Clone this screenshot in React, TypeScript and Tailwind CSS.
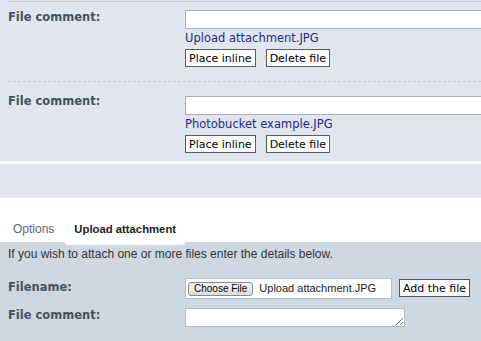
import React from 'react';

const verdana = { fontFamily: '"DejaVu Sans", Verdana, sans-serif' };
const arial = { fontFamily: '"Liberation Sans", Arial, sans-serif' };

type AttachmentProps = {
  fileName: string;
  labelPad: string;
  rowClass: string;
};

const AttachmentRow: React.FC<AttachmentProps> = ({ fileName, labelPad, rowClass }) => {
  return (
    <div className={`flex ${rowClass}`}>
      <div
        className={`w-[177px] shrink-0 text-[11.5px] font-bold leading-[13px] text-[#465064] ${labelPad}`}
        style={verdana}
      >
        File comment:
      </div>
      <div className="flex flex-col" style={verdana}>
        <input
          type="text"
          className="h-[19px] w-[320px] border border-[#a9b0ba] bg-white outline-none"
        />
        <div className="h-[20px] flex items-center text-[11.5px] text-[#23297f]">{fileName}</div>
        <div className="flex gap-[10px]">
          <button className="h-[18px] border border-[#5c5c5c] bg-white px-[3px] text-[11px] leading-none text-black">
            Place inline
          </button>
          <button className="h-[18px] border border-[#5c5c5c] bg-white px-[3px] text-[11px] leading-none text-black">
            Delete file
          </button>
        </div>
      </div>
    </div>
  );
};

export default function App() {
  return (
    <div className="w-[481px] h-[341px] overflow-hidden bg-white">
      {/* Pièces jointes déjà envoyées */}
      <div className="h-[161px] bg-[#e1e6ee] pl-2 pt-px">
        <div className="border-t border-[#c6cdd7]">
          <AttachmentRow fileName="Upload attachment.JPG" labelPad="pt-[1px]" rowClass="pt-[8px] pb-[14px]" />
        </div>
        <div className="border-t border-dashed border-[#c3cad4]">
          <AttachmentRow fileName="Photobucket example.JPG" labelPad="-mt-[1px]" rowClass="pt-[14px]" />
        </div>
      </div>

      <div className="h-[3px] bg-white" />
      <div className="h-[34px] bg-[#e1e6ee]" />

      {/* Onglets */}
      <div className="h-[44px] flex items-end pl-[4px] gap-[2px] bg-white" style={arial}>
        <div className="h-[26px] px-[9px] flex items-center text-[12px] text-[#5d6777]">Options</div>
        <div className="relative h-[26px] px-[9px] flex items-center text-[11.3px] font-bold text-[#1e1e1e] bg-white">
          Upload attachment
          <div className="absolute left-0 right-0 -bottom-[3px] h-[3px] bg-white rounded-b-[3px]" />
        </div>
      </div>

      {/* Panneau d'envoi */}
      <div className="h-[99px] bg-[#ced7e2] pl-2 pt-[5px]">
        <div className="text-[12px] leading-[14px] text-[#333333]" style={arial}>
          If you wish to attach one or more files enter the details below.
        </div>

        <div className="flex mt-[17px]">
          <div
            className="w-[177px] shrink-0 pt-[3px] text-[11.5px] font-bold leading-[13px] text-[#465064]"
            style={verdana}
          >
            Filename:
          </div>
          <div className="h-[21px] w-[207px] border border-[#b3bbc6] bg-white flex items-center pl-[2px]" style={arial}>
            <span className="h-[14px] px-[5px] flex items-center rounded-[3px] border border-[#8a8a8a] bg-gradient-to-b from-[#f7f7f7] to-[#dcdcdc] text-[10px] leading-none text-black">
              Choose File
            </span>
            <span className="ml-[6px] text-[11px] text-[#222222]">Upload attachment.JPG</span>
          </div>
          <button
            className="ml-[7px] mt-px h-[18px] border border-[#555555] bg-white px-[3px] text-[11px] leading-none text-black"
            style={verdana}
          >
            Add the file
          </button>
        </div>

        <div className="flex mt-[9px]">
          <div
            className="w-[177px] shrink-0 pt-[1px] text-[11.5px] font-bold leading-[13px] text-[#465064]"
            style={verdana}
          >
            File comment:
          </div>
          <textarea className="block h-[19px] w-[220px] border border-[#b3bbc6] bg-white outline-none" />
        </div>
      </div>
    </div>
  );
}
